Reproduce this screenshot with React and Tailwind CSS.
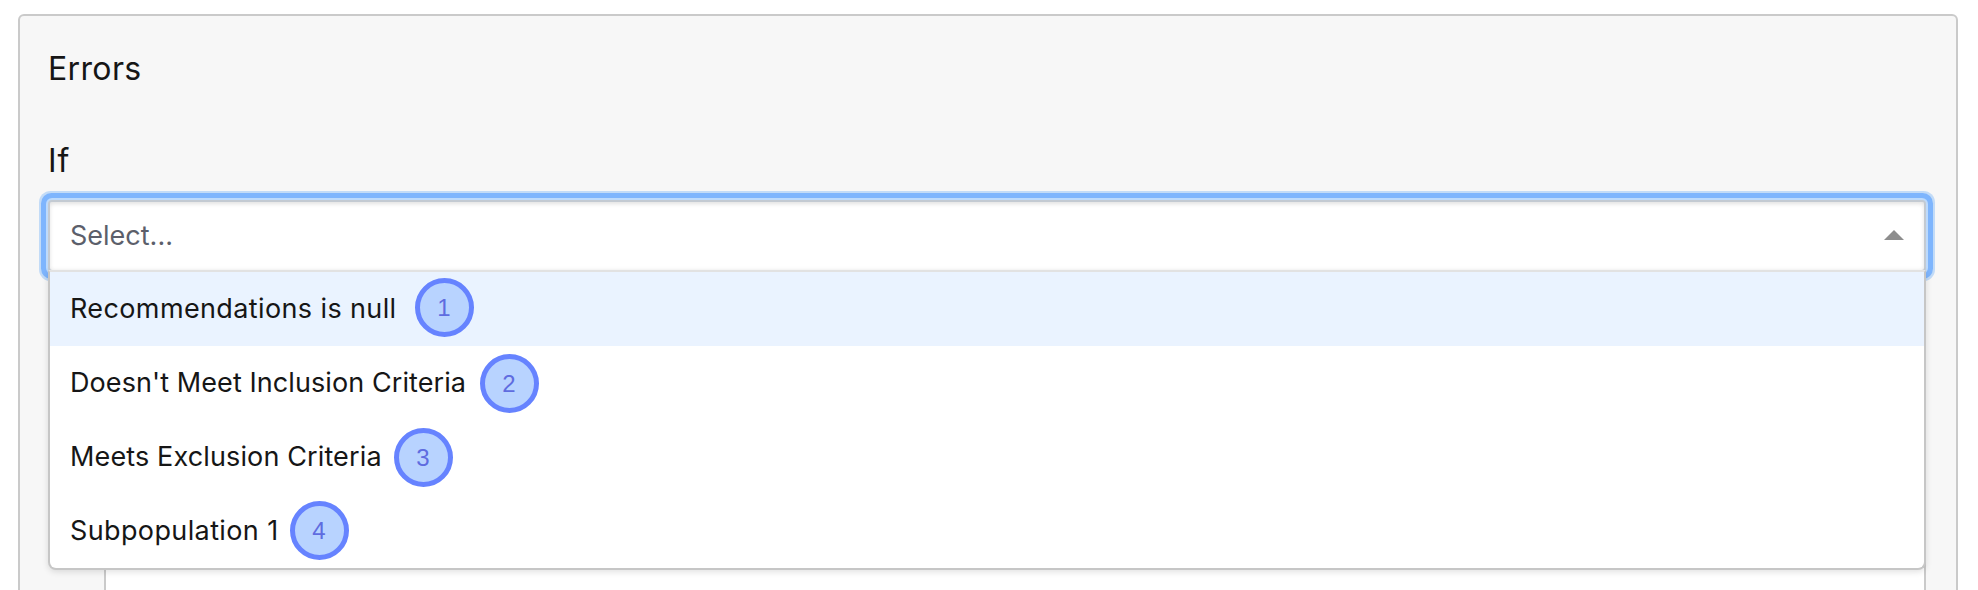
const options = [
  { label: "Recommendations is null", box: "w-[345px] tracking-[0.38px]", badge: "-mt-[3px]" },
  { label: "Doesn't Meet Inclusion Criteria", box: "w-[410px] tracking-[0.08px]", badge: "mt-px" },
  { label: "Meets Exclusion Criteria", box: "w-[324px] tracking-[0.13px]", badge: "mt-px" },
  { label: "Subpopulation 1", box: "w-[220px] tracking-[0.38px]", badge: "-mt-px" },
];

function Badge({ n, className }) {
  return (
    <span
      className={`flex size-[59px] shrink-0 items-center justify-center rounded-full border-5 border-[#6683ff] bg-[#b8d3ff] pr-px font-['Liberation_Sans',sans-serif] text-2xl leading-none text-[#5f6ce0] ${className}`}
    >
      {n}
    </span>
  );
}

function Menu() {
  return (
    <ul className="absolute -left-0.5 -right-0.5 top-[68px] rounded-b-lg border-2 border-[#c6c6c6] border-t-[#e2e2e2] bg-white shadow-[0_2px_6px_rgba(0,0,0,0.12)]">
      {options.map((o, i) => (
        <li
          key={o.label}
          className={`flex h-[74px] items-center pl-5 text-[27px] text-[#161616] ${i === 0 ? "bg-[#eaf3ff]" : ""}`}
        >
          <span className={`shrink-0 whitespace-nowrap ${o.box}`}>{o.label}</span>
          <Badge n={i + 1} className={o.badge} />
        </li>
      ))}
    </ul>
  );
}

export default function App() {
  return (
    <div className="h-[590px] overflow-hidden bg-white pl-[18px] pr-5 pt-3.5 font-[Inter,sans-serif]">
      <section className="h-[640px] rounded-md border-2 border-[#cacaca] bg-[#f7f7f7] px-7 pr-[30px] text-[#161616]">
        <h2 className="pt-8 text-[32px] leading-[42px] tracking-[0.35px]">Errors</h2>
        <div className="mt-[50px] text-[32px] leading-[42px] tracking-[0.8px]">If</div>
        <div className="relative mt-[18px] flex h-[72px] items-center justify-between rounded border-2 border-[#c3cad2] bg-white pl-5 pr-5 shadow-[0_0_0_2px_#bddafb,0_0_0_7px_#7eb5fd,0_0_0_9px_#c2dbf7,inset_0_2px_4px_rgba(0,0,0,0.12)]">
          <span className="text-[27px] leading-9 text-[#5c5f6b]">Select...</span>
          <svg width="20" height="10" viewBox="0 0 20 10" className="-mt-0.5">
            <path d="M10 0 20 10H0Z" fill="#8d8d8d" />
          </svg>
          <Menu />
        </div>
        <div className="ml-14 h-[400px] border-x-2 border-[#cacaca] bg-white" />
      </section>
    </div>
  );
}
